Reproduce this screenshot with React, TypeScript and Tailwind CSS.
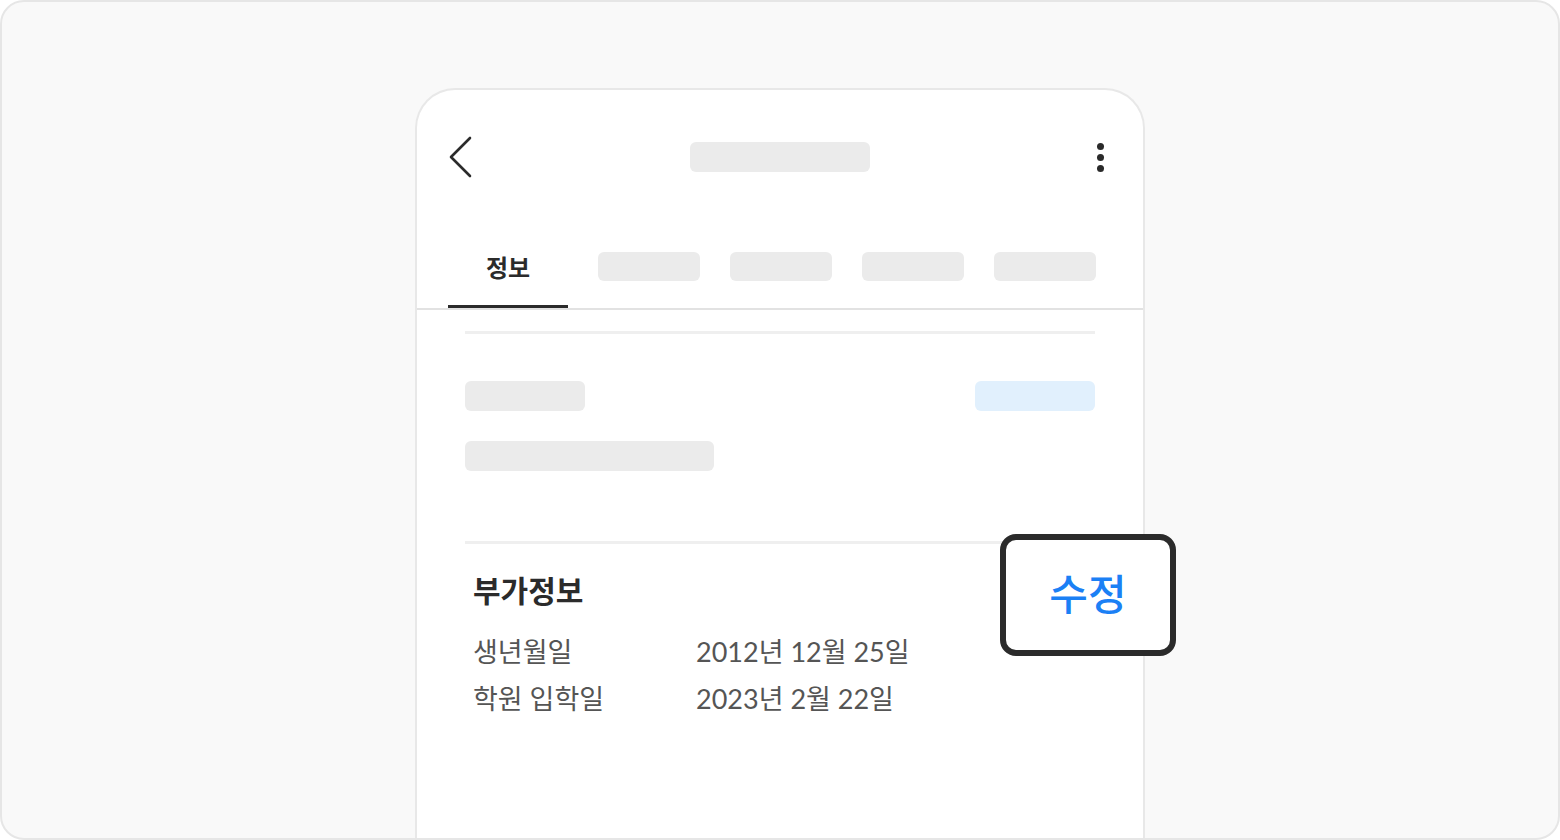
import React from "react";

const font = { fontFamily: 'Lato, "Noto Sans CJK KR", sans-serif' };

function Skeleton({ className }: { className: string }) {
    return <div className={`rounded-[6px] ${className}`} />;
}

export default function App() {
    const tabs = [1, 2, 3, 4];

    return (
        <div
            className="relative w-[1560px] h-[840px] bg-[#f9f9f9] border-2 border-[#e6e6e6] rounded-[24px] overflow-hidden flex justify-center"
            style={font}
        >
            {/* Phone frame */}
            <div className="mt-[86px] w-[730px] bg-white border-2 border-b-0 border-[#e8e8e8] rounded-t-[40px] flex flex-col">
                {/* Header */}
                <div className="h-[134px] flex items-center justify-between pl-[31px] pr-[39px]">
                    <svg width="26" height="42" viewBox="0 0 26 42" fill="none">
                        <path d="M22 2 L3 21 L22 40" stroke="#2b2b2b" strokeWidth="2.6" strokeLinecap="round" strokeLinejoin="round" />
                    </svg>
                    <Skeleton className="w-[180px] h-[30px] bg-[#ebebeb] ml-[-12px]" />
                    <div className="flex flex-col gap-[4px] items-center">
                        <span className="w-[7px] h-[7px] rounded-full bg-[#2a2a2a]" />
                        <span className="w-[7px] h-[7px] rounded-full bg-[#2a2a2a]" />
                        <span className="w-[7px] h-[7px] rounded-full bg-[#2a2a2a]" />
                    </div>
                </div>

                {/* Tabs */}
                <div className="h-[86px] border-b-2 border-[#e2e2e2] flex items-stretch gap-[30px] px-[31px]">
                    <div className="relative w-[120px] flex items-center justify-center pt-[3px]">
                        <span className="text-[24px] font-bold text-[#2b2b2b]">정보</span>
                        <div className="absolute left-0 right-0 bottom-0 h-[3px] bg-[#2b2b2b]" />
                    </div>
                    {tabs.map((t) => (
                        <div key={t} className="flex items-center pt-[1px]">
                            <Skeleton className="w-[102px] h-[29px] bg-[#ebebeb]" />
                        </div>
                    ))}
                </div>

                {/* Content */}
                <div className="px-[48px] pt-[21px] flex flex-col">
                    <div className="h-[3px] bg-[#efefef]" />
                    <div className="mt-[47px] flex justify-between">
                        <Skeleton className="w-[120px] h-[30px] bg-[#ebebeb]" />
                        <Skeleton className="w-[120px] h-[30px] bg-[#e1f0fd]" />
                    </div>
                    <Skeleton className="mt-[30px] w-[249px] h-[30px] bg-[#ebebeb]" />
                    <div className="mt-[70px] h-[3px] bg-[#efefef]" />

                    <div className="px-[8px] pt-[28px]">
                        <h2 className="text-[30px] leading-[36px] font-bold text-[#2b2b2b]">부가정보</h2>
                        <div className="mt-[28px] flex flex-col gap-[15px] text-[27px] leading-[32px] text-[#555555]">
                            <div className="flex">
                                <span className="w-[223px]">생년월일</span>
                                <span>2012년 12월 25일</span>
                            </div>
                            <div className="flex">
                                <span className="w-[223px]">학원 입학일</span>
                                <span>2023년 2월 22일</span>
                            </div>
                        </div>
                    </div>
                </div>
            </div>

            {/* Highlighted edit button */}
            <div className="absolute left-[998px] top-[532px] w-[176px] h-[122px] bg-white border-[6px] border-[#2b2b2b] rounded-[16px] flex items-center justify-center">
                <span className="text-[42px] font-medium text-[#1b80f5] pb-[2px]">수정</span>
            </div>
        </div>
    );
}
